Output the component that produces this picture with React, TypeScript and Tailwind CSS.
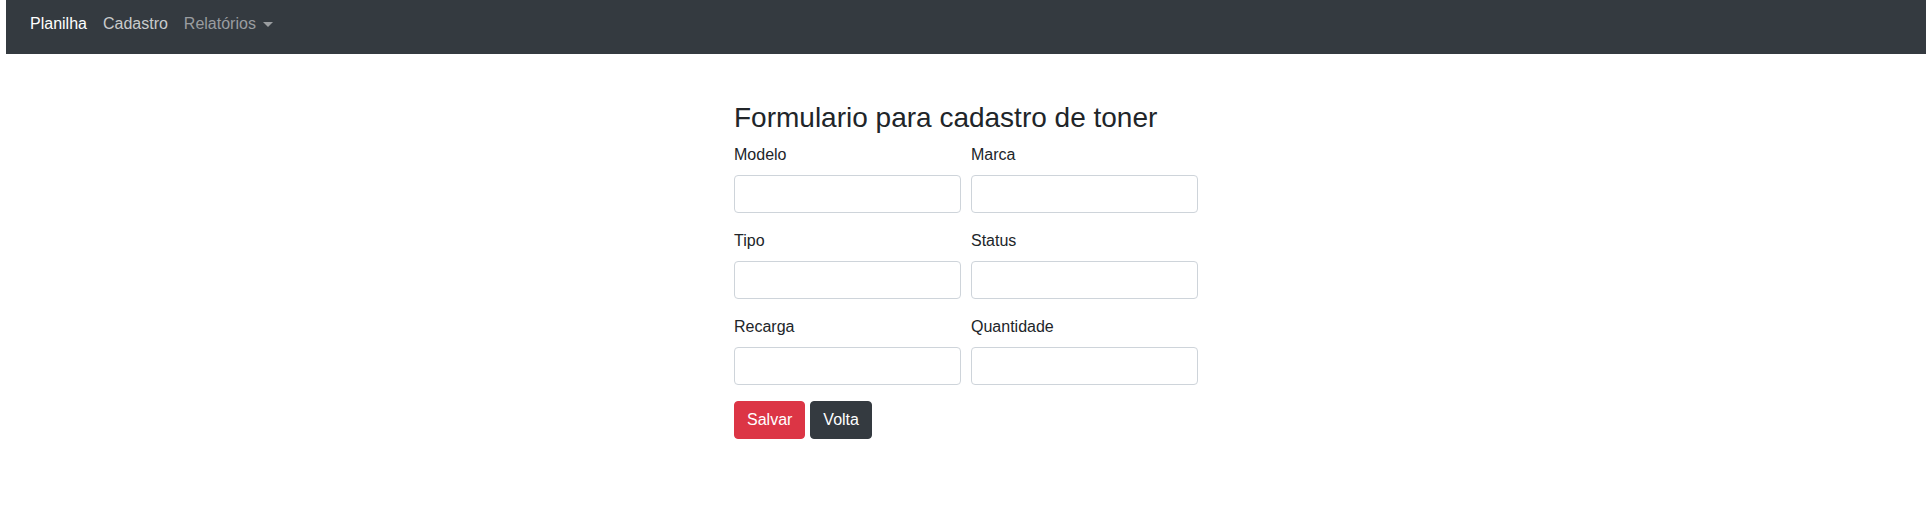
import { FC } from "react";

const Field: FC<{ label: string }> = ({ label }) => {
  return (
    <div className="mb-4">
      <label className="block mb-2 leading-6">{label}</label>
      <input
        type="text"
        className="block w-full h-[38px] px-3 border border-[#ced4da] rounded bg-white outline-none"
      />
    </div>
  );
};

export default function App() {
  return (
    <div
      className="min-h-screen bg-white text-[#212529] text-base pl-[6px]"
      style={{ fontFamily: '"Liberation Sans", Arial, sans-serif' }}
    >
      <nav className="bg-[#343a40] h-[54px] px-4 pt-[12px]">
        <ul className="flex items-center">
          <li>
            <a className="block px-2 leading-6 text-white">Planilha</a>
          </li>
          <li>
            <a className="block px-2 leading-6 text-[#c9cbcc]">Cadastro</a>
          </li>
          <li>
            <a className="flex items-center px-2 leading-6 text-[#9a9da0]">
              Relatórios
              <span className="ml-[7px] mt-[1px] w-0 h-0 border-x-[5px] border-x-transparent border-t-[5px] border-t-[#9a9da0]"></span>
            </a>
          </li>
        </ul>
      </nav>

      <div className="flex justify-center pt-[47px]">
        <form className="w-[464px]">
          <h3 className="text-[28px] leading-[1.2] mb-2 font-normal">
            Formulario para cadastro de toner
          </h3>
          <div className="grid grid-cols-2 gap-x-[10px]">
            <Field label="Modelo" />
            <Field label="Marca" />
            <Field label="Tipo" />
            <Field label="Status" />
            <Field label="Recarga" />
            <Field label="Quantidade" />
          </div>
          <div className="flex gap-[5px]">
            <button
              type="button"
              className="h-[38px] px-3 rounded bg-[#dc3545] border border-[#dc3545] text-white leading-6"
            >
              Salvar
            </button>
            <button
              type="button"
              className="h-[38px] px-3 rounded bg-[#343a40] border border-[#343a40] text-white leading-6"
            >
              Volta
            </button>
          </div>
        </form>
      </div>
    </div>
  );
}
